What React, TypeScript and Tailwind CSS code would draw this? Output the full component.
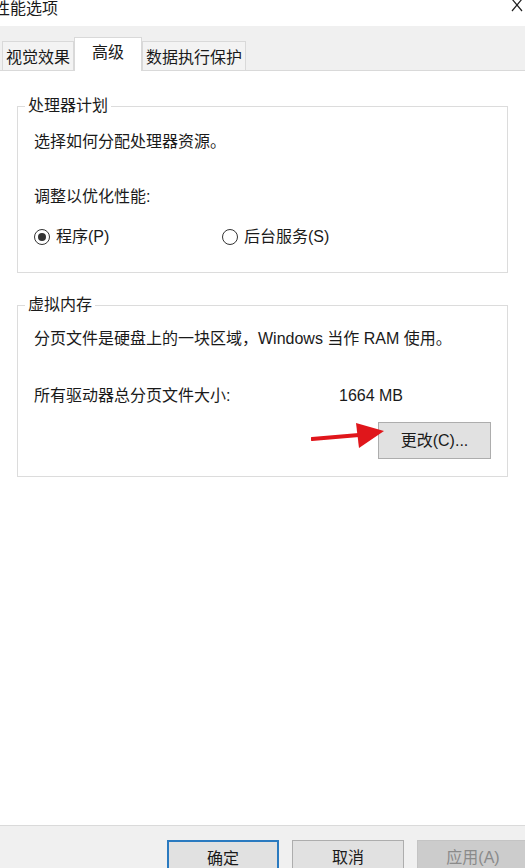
import React from "react";

const font = "font-['Liberation_Sans','Noto_Sans_CJK_SC',sans-serif]";

const Tab = ({ label, active }: { label: string; active?: boolean }) =>
  active ? (
    <div className="relative z-10 -mb-px flex h-[34px] items-start border border-b-0 border-[#d9d9d9] bg-white px-[17px] pt-[5px]">
      {label}
    </div>
  ) : (
    <div className="flex h-[29px] items-start border border-b-0 border-[#d9d9d9] bg-[#f3f3f3] px-[3px] pt-[6px]">
      {label}
    </div>
  );

const Radio = ({ checked, label }: { checked?: boolean; label: string }) => (
  <div className="flex items-center gap-[6px]">
    <span className="flex h-[16px] w-[16px] items-center justify-center rounded-full border border-[#333] bg-white">
      {checked && <span className="h-[8px] w-[8px] rounded-full bg-[#333]" />}
    </span>
    <span>{label}</span>
  </div>
);

const Btn = ({
  label,
  variant = "normal",
}: {
  label: string;
  variant?: "normal" | "default" | "disabled";
}) => {
  const cls =
    variant === "default"
      ? "border-2 border-[#2a7ac0] bg-[#e1e1e1] text-[#1a1a1a]"
      : variant === "disabled"
        ? "border border-[#c4c4c4] bg-[#cccccc] text-[#8a8a8a]"
        : "border border-[#adadad] bg-[#e1e1e1] text-[#1a1a1a]";
  return (
    <div className={`flex h-[36px] w-[112px] shrink-0 items-start justify-center pt-[7px] ${cls}`}>
      {label}
    </div>
  );
};

export default function App() {
  return (
    <div className={`relative flex h-[868px] w-[525px] flex-col overflow-hidden bg-white text-[16px] leading-[20px] text-[#1a1a1a] ${font}`}>
      {/* title bar */}
      <div className="flex h-[26px] shrink-0 items-start justify-between">
        <span className="ml-[-6px] mt-[-2px] leading-[22px]">性能选项</span>
        <svg className="mr-[2px] mt-[-1px]" width="12" height="13" viewBox="0 0 12 13">
          <path d="M1 0 L11 12 M11 0 L1 12" stroke="#222" strokeWidth="1.2" fill="none" />
        </svg>
      </div>

      {/* tab strip */}
      <div className="flex h-[45px] shrink-0 items-end border-b border-[#d9d9d9] bg-[#f0f0f0] pl-[2px]">
        <Tab label="视觉效果" />
        <Tab label="高级" active />
        <Tab label="数据执行保护" />
      </div>

      {/* content */}
      <div className="flex flex-1 flex-col px-[17px] pt-[25px]">
        <fieldset className="border border-[#dcdcdc] px-[16px] pb-[25px] pt-[16px]">
          <legend className="ml-[-9px] px-[3px]">处理器计划</legend>
          <p>选择如何分配处理器资源。</p>
          <p className="mt-[35px]">调整以优化性能:</p>
          <div className="mt-[20px] flex items-center">
            <div className="w-[188px]">
              <Radio checked label="程序(P)" />
            </div>
            <Radio label="后台服务(S)" />
          </div>
        </fieldset>

        <fieldset className="mt-[22px] border border-[#dcdcdc] px-[16px] pb-[17px] pt-[14px]">
          <legend className="ml-[-9px] px-[3px]">虚拟内存</legend>
          <p>分页文件是硬盘上的一块区域，Windows 当作 RAM 使用。</p>
          <div className="mt-[37px] flex">
            <span className="w-[305px]">所有驱动器总分页文件大小:</span>
            <span>1664 MB</span>
          </div>
          <div className="relative mt-[16px] flex justify-end">
            <svg className="absolute left-[277px] top-[-2px]" width="74" height="30" viewBox="0 0 74 30">
              <path d="M1 19 L48 15" stroke="#e0161b" strokeWidth="4" strokeLinecap="round" />
              <path d="M45 3 L73 11 L48 28 Z" fill="#e0161b" />
            </svg>
            <div className="flex h-[37px] w-[113px] items-center justify-center border border-[#adadad] bg-[#e1e1e1]">
              更改(C)...
            </div>
          </div>
        </fieldset>
      </div>

      {/* bottom buttons */}
      <div className="flex h-[43px] shrink-0 items-start gap-[13px] border-t border-[#dadada] bg-[#f0f0f0] pl-[167px] pt-[14px]">
        <Btn label="确定" variant="default" />
        <Btn label="取消" />
        <Btn label="应用(A)" variant="disabled" />
      </div>
    </div>
  );
}
